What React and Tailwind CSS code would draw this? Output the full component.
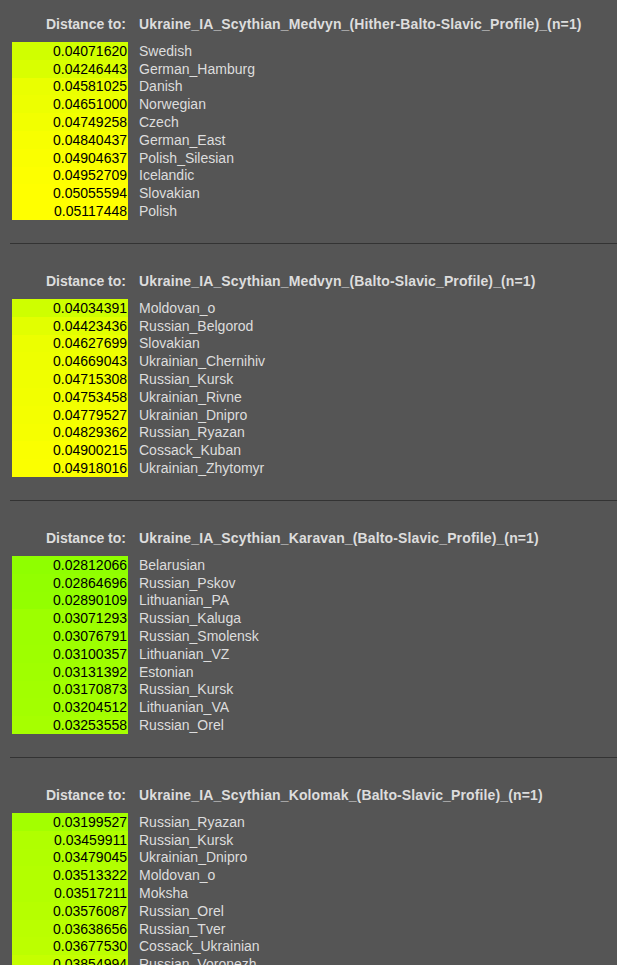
import React from "react";

const sections = [
  {
    title: "Ukraine_IA_Scythian_Medvyn_(Hither-Balto-Slavic_Profile)_(n=1)",
    rows: [
      ["0.04071620", "Swedish"],
      ["0.04246443", "German_Hamburg"],
      ["0.04581025", "Danish"],
      ["0.04651000", "Norwegian"],
      ["0.04749258", "Czech"],
      ["0.04840437", "German_East"],
      ["0.04904637", "Polish_Silesian"],
      ["0.04952709", "Icelandic"],
      ["0.05055594", "Slovakian"],
      ["0.05117448", "Polish"],
    ],
  },
  {
    title: "Ukraine_IA_Scythian_Medvyn_(Balto-Slavic_Profile)_(n=1)",
    rows: [
      ["0.04034391", "Moldovan_o"],
      ["0.04423436", "Russian_Belgorod"],
      ["0.04627699", "Slovakian"],
      ["0.04669043", "Ukrainian_Chernihiv"],
      ["0.04715308", "Russian_Kursk"],
      ["0.04753458", "Ukrainian_Rivne"],
      ["0.04779527", "Ukrainian_Dnipro"],
      ["0.04829362", "Russian_Ryazan"],
      ["0.04900215", "Cossack_Kuban"],
      ["0.04918016", "Ukrainian_Zhytomyr"],
    ],
  },
  {
    title: "Ukraine_IA_Scythian_Karavan_(Balto-Slavic_Profile)_(n=1)",
    rows: [
      ["0.02812066", "Belarusian"],
      ["0.02864696", "Russian_Pskov"],
      ["0.02890109", "Lithuanian_PA"],
      ["0.03071293", "Russian_Kaluga"],
      ["0.03076791", "Russian_Smolensk"],
      ["0.03100357", "Lithuanian_VZ"],
      ["0.03131392", "Estonian"],
      ["0.03170873", "Russian_Kursk"],
      ["0.03204512", "Lithuanian_VA"],
      ["0.03253558", "Russian_Orel"],
    ],
  },
  {
    title: "Ukraine_IA_Scythian_Kolomak_(Balto-Slavic_Profile)_(n=1)",
    rows: [
      ["0.03199527", "Russian_Ryazan"],
      ["0.03459911", "Russian_Kursk"],
      ["0.03479045", "Ukrainian_Dnipro"],
      ["0.03513322", "Moldovan_o"],
      ["0.03517211", "Moksha"],
      ["0.03576087", "Russian_Orel"],
      ["0.03638656", "Russian_Tver"],
      ["0.03677530", "Cossack_Ukrainian"],
      ["0.03854994", "Russian_Voronezh"],
      ["0.03893120", "Russian_Bryansk"],
    ],
  },
];

function cellColor(d) {
  const r = Math.min(255, Math.round(parseFloat(d) * 5100));
  return `rgb(${r},255,0)`;
}

export default function App() {
  return (
    <div
      className="min-h-[965px] bg-[#555555] pt-[15px] text-[14px] leading-[16px] text-[#dddddd]"
      style={{ fontFamily: '"Liberation Sans", Arial, sans-serif' }}
    >
      {sections.map((s, i) => (
        <div key={i}>
          <div className="flex h-[18px] items-center font-bold">
            <div className="w-[128px] pr-[2px] text-right">Distance to:</div>
            <div className="ml-[11px] whitespace-nowrap tracking-[0.13px]">{s.title}</div>
          </div>
          <div className="mt-[9px] flex flex-col">
            {s.rows.map(([d, n], j) => (
              <div key={j} className="flex h-[17.8px] items-center">
                <div
                  className="ml-[12px] flex h-full w-[116px] items-center justify-end pr-[1px] text-black"
                  style={{ backgroundColor: cellColor(d) }}
                >
                  {d}
                </div>
                <div className="ml-[11px] whitespace-nowrap">{n}</div>
              </div>
            ))}
          </div>
          <div className="mb-[28px] ml-[10px] mt-[23px] h-px bg-[#333333]" />
        </div>
      ))}
    </div>
  );
}
